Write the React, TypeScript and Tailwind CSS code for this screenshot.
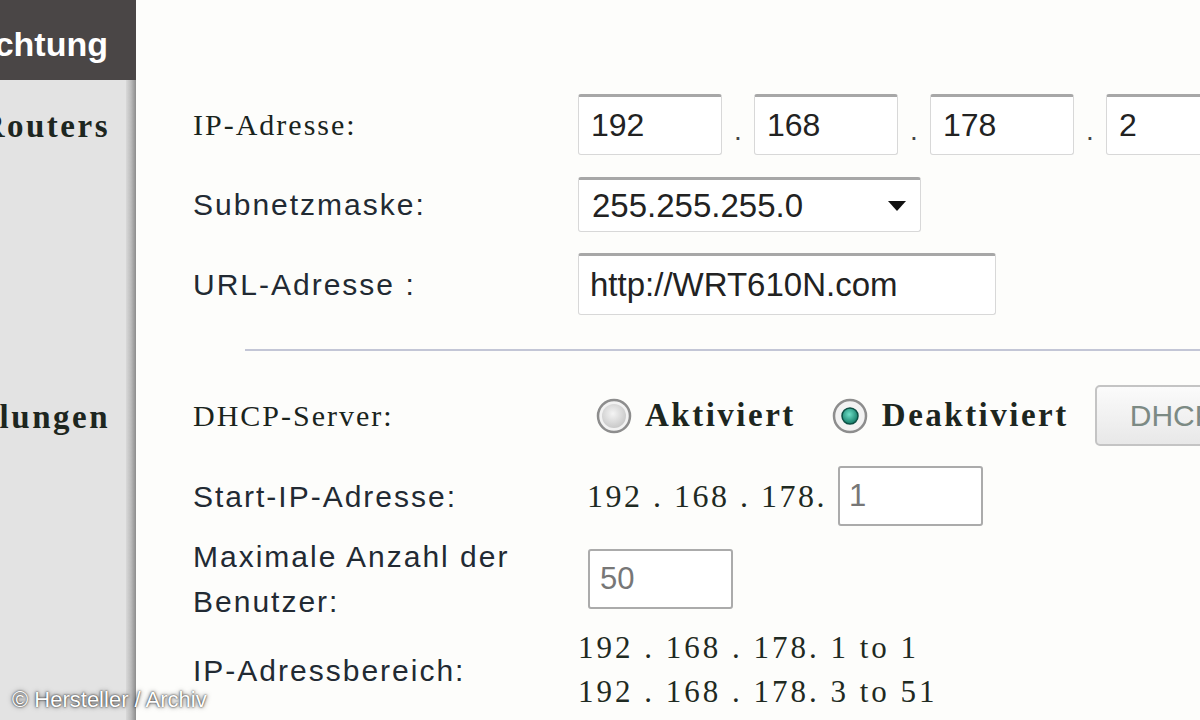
const sans = "font-['Liberation_Sans',Arial,sans-serif]"
const serif = "font-['Liberation_Serif','Times_New_Roman',serif]"

const SansLabel = ({ children }: { children: React.ReactNode }) => (
  <span className={`${sans} text-[30px] tracking-[2px] text-[#222a33]`}>{children}</span>
)

const SerifLabel = ({ children }: { children: React.ReactNode }) => (
  <span className={`${serif} text-[30px] tracking-[2px] text-[#1a241d]`}>{children}</span>
)

const Radio = ({ checked }: { checked?: boolean }) => (
  <svg width="36" height="36" viewBox="0 0 36 36" className="flex-none">
    <defs>
      <radialGradient id={checked ? 'rOn' : 'rOff'} cx="45%" cy="40%" r="60%">
        <stop offset="0%" stopColor={checked ? '#6fe0c8' : '#f4f4f4'} />
        <stop offset="100%" stopColor={checked ? '#127a66' : '#c9c9c9'} />
      </radialGradient>
    </defs>
    <circle cx="18" cy="18" r="16" fill="#f2f2f2" stroke="#8d8d8d" strokeWidth="2.5" />
    {checked ? (
      <circle cx="18" cy="18" r="8" fill="url(#rOn)" stroke="#0d4f44" strokeWidth="1.5" />
    ) : (
      <circle cx="18" cy="18" r="12" fill="url(#rOff)" />
    )}
  </svg>
)

const IpBox = ({ value }: { value: string }) => (
  <input
    readOnly
    value={value}
    className={`${sans} h-[61px] w-[144px] flex-none rounded-[3px] border border-[#d8d8d8] border-t-[3px] border-t-[#a7a7a7] bg-white pl-[12px] text-[32px] text-[#222] outline-none`}
  />
)

const Dot = () => (
  <span className={`${sans} flex w-[32px] flex-none justify-center pt-[12px] text-[28px] text-[#444]`}>.</span>
)

const App = () => {
  return (
    <div className="relative flex h-[720px] w-[1200px] overflow-hidden bg-[#fdfdfb]">
      {/* left menu */}
      <aside className="flex w-[136px] flex-none flex-col">
        <div className="flex h-[80px] items-center justify-end overflow-hidden bg-[#4a4646] pr-[28px] pt-[8px]">
          <span className={`${sans} whitespace-nowrap text-[34px] font-bold text-white`}>Einrichtung</span>
        </div>
        <div className="flex flex-1">
          <div className="flex flex-1 flex-col overflow-hidden bg-[#e3e3e3]">
            <div className="mt-[27px] flex h-[40px] items-center justify-end pr-[16px]">
              <span className={`${serif} whitespace-nowrap text-[33px] font-bold tracking-[2.5px] text-[#1d2620]`}>
                Einstellungen des Routers
              </span>
            </div>
            <div className="mt-[251px] flex h-[40px] items-center justify-end pr-[16px]">
              <span className={`${serif} whitespace-nowrap text-[33px] font-bold tracking-[2.5px] text-[#1d2620]`}>
                Netzwerkeinstellungen
              </span>
            </div>
          </div>
          <div className="w-[10px] flex-none bg-gradient-to-r from-[#d9d9d9] via-[#bcbcbc] to-[#8c8c8c]" />
        </div>
      </aside>

      {/* form */}
      <main className="flex min-w-0 flex-1 flex-col overflow-hidden pl-[57px] pt-[94px]">
        <div className="flex h-[61px] items-center">
          <div className="w-[385px] flex-none">
            <SerifLabel>IP-Adresse:</SerifLabel>
          </div>
          <IpBox value="192" />
          <Dot />
          <IpBox value="168" />
          <Dot />
          <IpBox value="178" />
          <Dot />
          <IpBox value="2" />
        </div>

        <div className="mt-[22px] flex h-[55px] items-center">
          <div className="w-[385px] flex-none">
            <SansLabel>Subnetzmaske:</SansLabel>
          </div>
          <div className="flex h-full w-[343px] flex-none items-center justify-between rounded-[3px] border border-[#d8d8d8] border-t-[3px] border-t-[#a7a7a7] bg-white pl-[13px] pr-[14px]">
            <span className={`${sans} text-[33px] text-[#222]`}>255.255.255.0</span>
            <span className="h-0 w-0 border-x-[9px] border-t-[10px] border-x-transparent border-t-[#111]" />
          </div>
        </div>

        <div className="mt-[21px] flex h-[62px] items-center">
          <div className="w-[385px] flex-none">
            <SansLabel>URL-Adresse :</SansLabel>
          </div>
          <input
            readOnly
            value="http://WRT610N.com"
            className={`${sans} h-full w-[418px] flex-none rounded-[3px] border border-[#d8d8d8] border-t-[3px] border-t-[#a7a7a7] bg-white pl-[11px] text-[33px] text-[#222] outline-none`}
          />
        </div>

        <div className="ml-[52px] mt-[34px] h-[2px] flex-none bg-[#c3c6d6]" />

        <div className="mt-[34px] flex h-[61px] items-center">
          <div className="w-[385px] flex-none">
            <SerifLabel>DHCP-Server:</SerifLabel>
          </div>
          <div className="ml-[18px] flex flex-none items-center gap-[13px]">
            <Radio />
            <span className={`${serif} whitespace-nowrap text-[33px] font-bold tracking-[2.5px] text-[#1d2620]`}>Aktiviert</span>
          </div>
          <div className="ml-[36px] flex flex-none items-center gap-[14px]">
            <Radio checked />
            <span className={`${serif} whitespace-nowrap text-[33px] font-bold tracking-[2.5px] text-[#1d2620]`}>Deaktiviert</span>
          </div>
          <button
            className={`${sans} ml-[26px] h-full flex-none whitespace-nowrap rounded-[5px] border-2 border-[#c4c4c4] bg-gradient-to-b from-[#fbfbfb] to-[#e8e8e8] pl-[33px] pr-[20px] text-[30px] text-[#7c8a84]`}
          >
            DHCP-Reservierung
          </button>
        </div>

        <div className="mt-[20px] flex h-[60px] items-center">
          <div className="w-[385px] flex-none">
            <SansLabel>Start-IP-Adresse:</SansLabel>
          </div>
          <span className={`${serif} ml-[9px] w-[251px] flex-none whitespace-nowrap text-[32px] tracking-[2.5px] text-[#1f2a22]`}>
            192 . 168 . 178.
          </span>
          <input
            readOnly
            value="1"
            className={`${sans} h-full w-[145px] flex-none rounded-[3px] border-2 border-[#ababab] bg-white pl-[9px] text-[31px] text-[#777] outline-none`}
          />
        </div>

        <div className="mt-[23px] flex h-[60px] items-center">
          <div className="flex w-[385px] flex-none flex-col leading-[45px]">
            <SansLabel>Maximale Anzahl der</SansLabel>
            <SansLabel>Benutzer:</SansLabel>
          </div>
          <input
            readOnly
            value="50"
            className={`${sans} ml-[10px] h-full w-[145px] flex-none rounded-[3px] border-2 border-[#ababab] bg-white pl-[10px] text-[31px] text-[#777] outline-none`}
          />
        </div>

        <div className="mt-[17px] flex h-[88px] items-center">
          <div className="w-[385px] flex-none">
            <SansLabel>IP-Adressbereich:</SansLabel>
          </div>
          <div className={`${serif} flex flex-col whitespace-nowrap text-[31px] leading-[44px] tracking-[3px] text-[#1f2a22]`}>
            <span>192 . 168 . 178. 1 to 1</span>
            <span>192 . 168 . 178. 3 to 51</span>
          </div>
        </div>
      </main>

      <span
        className={`${sans} absolute left-[12px] top-[683px] text-[22px] text-white [text-shadow:0_0_2px_rgba(0,0,0,0.9),0_0_5px_rgba(0,0,0,0.6)]`}
      >
        © Hersteller / Archiv
      </span>
    </div>
  )
}

export default App
